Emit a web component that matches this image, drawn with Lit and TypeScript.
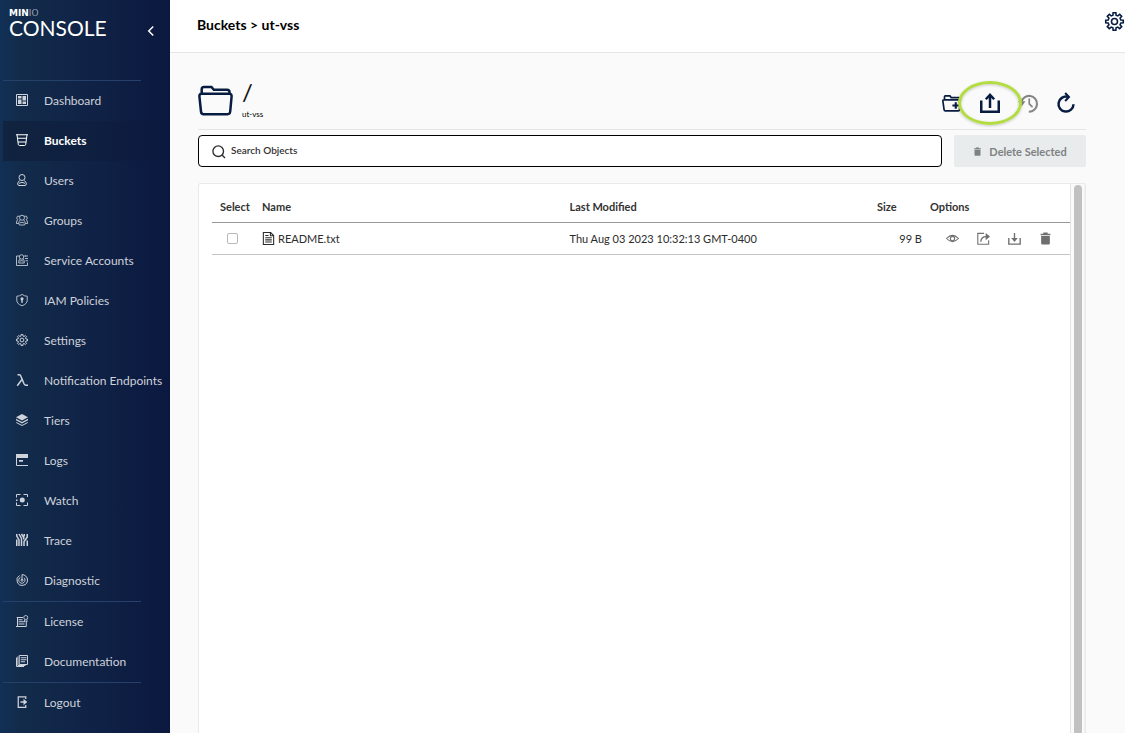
import { LitElement, html, svg, css, SVGTemplateResult } from "lit";
import { customElement, property } from "lit/decorators.js";

/** Outline of a cog with eight teeth, centred in a 24 unit box. */
function cogPath(outer = 11.2, inner = 8.2): string {
  const points: string[] = [];
  const point = (radius: number, degrees: number) => {
    const a = (degrees * Math.PI) / 180;
    points.push(`${(12 + radius * Math.cos(a)).toFixed(2)} ${(12 + radius * Math.sin(a)).toFixed(2)}`);
  };
  for (let i = 0; i < 8; i++) {
    const mid = i * 45;
    point(inner, mid - 14);
    point(outer, mid - 9);
    point(outer, mid + 9);
    point(inner, mid + 14);
  }
  return `M${points.join("L")}Z`;
}

const icons: Record<string, SVGTemplateResult> = {
  dashboard: svg`<path class="line" d="M1 1H23V23H1Z"/><path class="fill" d="M4 4h7v5H4zM4 11h7v9H4zM13 4h7v9h-7zM13 15h7v5h-7z"/>`,
  buckets: svg`<path class="line" d="M0 1.5H24M2 1.500L4.500 20.500Q5 23 7 23H17Q19 23 19.500 20.500L22 1.500M2.500 8.500H21.500M4 16H20"/>`,
  users: svg`<circle class="line" cx="12" cy="7" r="6"/><path class="line" d="M7.500 13.200C4.500 14.500 3.500 17.500 3.500 20Q3.500 23 6 23H18Q20.500 23 20.500 20C20.500 17.500 19.500 14.500 16.500 13.200M6 18.500Q12 15 18 18.500"/>`,
  groups: svg`<g class="thin"><circle cx="12" cy="7.500" r="5"/><path d="M8.500 12Q5.500 14.500 5.500 19Q5.500 22 8 22H16Q18.500 22 18.500 19Q18.500 14.500 15.500 12M7.500 18Q12 15 16.500 18"/><path d="M7.500 4.500Q1.500 2.500 1.500 8Q1.500 10.500 3.500 11.500Q.800 13 .800 19H5.500M16.500 4.500Q22.500 2.500 22.500 8Q22.500 10.500 20.500 11.500Q23.200 13 23.200 19H18.500"/></g>`,
  accounts: svg`<g class="thin"><path d="M7 4H1V23H23V17M20 4H17"/><circle cx="11" cy="6" r="4.500"/><path d="M8.500 9.500Q5.500 11 5.500 15V18H16.500V15Q16.500 11 13.500 9.500M7 14.500Q11 12 15 14.500"/><path d="M17 4H24M18 9H24M19 13.500H24"/></g>`,
  policies: svg`<path class="thin" d="M12 .8Q7 4.500 1.500 4.500V12Q1.500 20 12 23.500Q22.500 20 22.500 12V4.500Q17 4.500 12 .8Z"/><circle class="fill" cx="12" cy="9.500" r="3"/><path class="fill" d="M10.500 10h3v7.500h-3z"/>`,
  settings: svg`<path class="line" d="${cogPath()}"/><circle class="line" cx="12" cy="12" r="3.800"/>`,
  lambda: svg`<path class="heavy" d="M3 1.500H6.500Q9 1.500 10 5L16 19.500Q17.500 22.500 20 22.500H24M12.300 10.500L2.500 23.500"/>`,
  tiers: svg`<path class="fill" d="M12 0L24 6.500L12 13L0 6.500Z"/><path class="fill" d="M0 9.500L12 16L24 9.500V12.500L12 19L0 12.500Z"/><path class="line" d="M.5 17L12 23L23.500 17"/>`,
  logs: svg`<path class="line" d="M1 5V23H24"/><path class="fill" d="M0 0H24V8H0zM6 12h8v3.500H6z"/>`,
  watch: svg`<circle class="fill" cx="12.500" cy="12" r="5"/><path class="line" d="M1 7V1H9M15 1H23V6M23 17V23H15M9 23H1V17"/><path class="fill" d="M0 11h3v3H0z"/>`,
  trace: svg`<path class="heavy" d="M1.500 0V4L6 12V24M6 0L11 9V24M11 0L15.500 7V11M1.500 11V24M16.500 0V5M22.500 0V6L18.500 12L16 15V24M22.500 13V24"/>`,
  diagnostic: svg`<path class="line" d="M12 12V1.300M7 3A10.600 10.600 0 1 0 23 12M12 1.300A10.800 10.800 0 0 1 23 12M9 6.500A6.300 6.300 0 1 0 16 7.500"/><circle class="line" cx="12" cy="12.500" r="2"/>`,
  license: svg`<path class="line" d="M14 5H1.500M3 5V23H20.500V13M0 23H20"/><path class="line" d="M5 9.500H13M5 13.500H17M5 18H17"/><circle class="thin" cx="19.500" cy="5" r="4"/><path class="thin" d="M17 9V13.500L19.500 12L22 13.500V9"/>`,
  documentation: svg`<path class="line" d="M6.500 1H23V19H6.500ZM1 5V23H16M3.800 3V21H19"/><path class="line" d="M9.500 5.500H21M9.500 9.500H21M9.500 13.500H18"/>`,
  logout: svg`<path class="bold" d="M19.500 6V1.500H4.500V22.500H19.500V18"/><path class="heavy" d="M9 12H18"/><path class="fill" d="M15 5.500L22.500 12L15 18.500Z"/>`,
  chevron: svg`<path class="heavy" d="M16.500 3L7.500 12L16.500 21"/>`,
  folder: svg`<path class="bold" d="M3.700 9V4.500Q3.700 2 6 2H13.500L15.800 4.700H29Q31.500 4.700 31.500 7.200V9M3.500 8.800H31.500Q33.800 8.800 33.600 11.500L32.200 26.500Q31.900 29.200 29.500 29.200H5.500Q3.300 29.200 3 26.500L1.400 11.500Q1.200 8.800 3.500 8.800Z"/>`,
  folderPlus: svg`<path class="line" d="M3 8V4.500Q3 3.500 4 3.500H9.500L11 5.500H20.500Q21.500 5.500 21.500 6.500V8M2.500 8.200H22L21 20Q20.800 21.500 19.500 21.500H4Q2.700 21.500 2.500 20L1 9.500Q.8 8.200 2.500 8.200Z"/><path class="bold" d="M16.500 11V19M12.500 15H20.500"/>`,
  upload: svg`<path class="heavy" d="M1.500 9V22.500H22.500V9M12 18V3"/><path class="heavy" d="M7 7.500L12 2.300L17 7.500"/>`,
  history: svg`<path class="bold" d="M4 11A9.500 9.500 0 1 1 13 22.500"/><path class="fill" d="M0 10H9L4.500 16Z"/><path class="line" d="M13.500 6.500V13L17.500 17"/>`,
  refresh: svg`<path class="heavy" d="M14 4.500A9 9 0 1 0 21 13.500"/><path class="bold" d="M11 0L15.500 4.700L11 9.500"/>`,
  search: svg`<circle class="bold" cx="11.500" cy="11.500" r="9.800"/><path class="bold" d="M18.500 18.500L24 24"/>`,
  trash: svg`<path class="fill" d="M8 1H16V3H21V6H3V3H8ZM4 7.500H20V21Q20 23 18 23H6Q4 23 4 21Z"/>`,
  file: svg`<path class="line" d="M2.500 1H16L21.500 6.500V23H2.500ZM15.500 2V7H20.500M6 6.500H12M6 10.500H18M6 14.500H18M6 18.500H18"/>`,
  eye: svg`<path class="line" d="M1 12Q12 .5 23 12Q12 23.500 1 12Z"/><circle class="line" cx="12" cy="12" r="4"/>`,
  share: svg`<path class="line" d="M13 2.500H1.500V22.500H21.500V15"/><path class="bold" d="M7 18Q7.500 8.500 17 8.500"/><path class="fill" d="M16 2L24 8.500L16 15Z"/>`,
  download: svg`<path class="bold" d="M1.500 11V22.500H22.500V11M12 2V14"/><path class="fill" d="M6 11H18L12 18.500Z"/>`,
};

@customElement("ui-icon")
class UiIcon extends LitElement {
  @property() name = "";
  @property() box = "0 0 24 24";

  static styles = css`
    :host { display: block; flex: none; width: 12px; height: 12px; }
    svg { display: block; width: 100%; height: 100%; overflow: visible; }
    .line, .bold, .thin, .heavy { fill: none; stroke: currentColor; stroke-width: 2; }
    .thin { stroke-width: 1.700; }
    .bold { stroke-width: 2.500; }
    .heavy { stroke-width: 3; }
    .fill { fill: currentColor; }
  `;

  render() {
    return html`<svg viewBox=${this.box} aria-hidden="true">${icons[this.name]}</svg>`;
  }
}

interface Entry {
  icon: string;
  label: string;
  active?: boolean;
}

const navGroups: Entry[][] = [
  [
    { icon: "dashboard", label: "Dashboard" },
    { icon: "buckets", label: "Buckets", active: true },
    { icon: "users", label: "Users" },
    { icon: "groups", label: "Groups" },
    { icon: "accounts", label: "Service Accounts" },
    { icon: "policies", label: "IAM Policies" },
    { icon: "settings", label: "Settings" },
    { icon: "lambda", label: "Notification Endpoints" },
    { icon: "tiers", label: "Tiers" },
    { icon: "logs", label: "Logs" },
    { icon: "watch", label: "Watch" },
    { icon: "trace", label: "Trace" },
    { icon: "diagnostic", label: "Diagnostic" },
  ],
  [
    { icon: "license", label: "License" },
    { icon: "documentation", label: "Documentation" },
  ],
  [{ icon: "logout", label: "Logout" }],
];

@customElement("console-sidebar")
class ConsoleSidebar extends LitElement {
  static styles = css`
    :host {
      display: block;
      flex: none;
      width: 170px;
      box-sizing: border-box;
      background: linear-gradient(90deg, #113055 0%, #122b4b 12%, #0f2145 60%, #0b183f 100%);
      color: #ced2da;
      overflow: hidden;
    }
    .brand { display: flex; justify-content: space-between; height: 72px; padding: 8px 13px 0 9px; color: #fff; }
    .logo { display: flex; flex-direction: column; }
    .mark { font: 700 9px/10px "DejaVu Sans", sans-serif; }
    .mark span { font-weight: 200; }
    .product { font: 400 21px/20px Lato, sans-serif; }
    .collapse { align-self: flex-start; margin-top: 17px; padding: 0; border: 0; background: none; color: #fff; }
    ul { list-style: none; margin: 0; padding: 0 0 0 3px; }
    ul::before { content: ""; display: block; width: 138px; height: 1px; background: #25406a; }
    a {
      display: flex;
      align-items: center;
      gap: 16px;
      height: 38px;
      padding: 0 0 2px 13px;
      font-size: 12px;
      color: inherit;
      text-decoration: none;
      white-space: nowrap;
    }
    a.active { font-weight: 700; color: #fff; background: linear-gradient(90deg, #10233f 0%, #0e1f40 55%, #0b183f 100%); }
  `;

  render() {
    return html`
      <div class="brand">
        <div class="logo">
          <div class="mark">MIN<span>IO</span></div>
          <div class="product">CONSOLE</div>
        </div>
        <button class="collapse" aria-label="Collapse menu"><ui-icon name="chevron"></ui-icon></button>
      </div>
      <nav>
        ${navGroups.map(
          (group) => html`<ul>
            ${group.map(
              (item) => html`<li>
                <a href="#" class=${item.active ? "active" : ""}><ui-icon name=${item.icon}></ui-icon>${item.label}</a>
              </li>`
            )}
          </ul>`
        )}
      </nav>
    `;
  }
}

@customElement("object-browser")
class ObjectBrowser extends LitElement {
  static styles = css`
    :host { display: flex; flex-direction: column; flex: 1; min-height: 0; padding: 28px 39px 0 28px; color: #2c2c2c; }
    button { padding: 0; border: 0; background: none; color: inherit; font: inherit; }
    .title { display: flex; align-items: flex-start; height: 48px; border-bottom: 1px solid #e5e5e5; }
    .folder { width: 35px; height: 31px; margin-top: 4px; color: #081c42; }
    .path { flex: 1; margin-left: 9px; }
    h1 { margin: 0; font-size: 24px; font-weight: 400; line-height: 22px; color: #111; }
    .bucket { margin-top: 4px; font-size: 8px; line-height: 14px; color: #000; }
    .tools { position: relative; display: flex; align-items: center; gap: 18px; height: 44px; padding-right: 10px; color: #081c42; }
    .tools ui-icon { width: 20px; height: 20px; }
    .history { color: #848484; }
    .highlight {
      position: absolute;
      left: 16px;
      top: 0;
      width: 64px;
      height: 44px;
      box-sizing: border-box;
      border: 3px solid #b2dc40;
      border-radius: 50%;
      box-shadow: 0 1px 3px rgba(0, 0, 0, 0.2), inset 0 1px 3px rgba(0, 0, 0, 0.2);
    }
    .filters { display: flex; gap: 12px; height: 32px; margin: 5px 0 16px; }
    .search {
      display: flex;
      flex: 1;
      align-items: center;
      gap: 6px;
      padding-left: 13px;
      border: 1px solid #000;
      border-radius: 4px;
      background: #fff;
    }
    .search ui-icon { width: 13px; height: 13px; }
    .search input { flex: 1; padding: 0 0 2px; border: 0; outline: 0; font: 600 10px Lato, sans-serif; }
    .search input::placeholder { color: #333; opacity: 1; }
    .delete {
      display: flex;
      align-items: center;
      justify-content: center;
      gap: 7px;
      width: 132px;
      border-radius: 2px;
      background: #e8ecec;
      color: #7f8282;
      font-weight: 700;
      font-size: 11px;
    }
    .delete ui-icon { width: 9px; height: 9px; }
    .panel { display: flex; flex: 1; min-height: 0; border: 1px solid #eaeaea; border-bottom: 0; border-radius: 3px 3px 0 0; background: #fff; }
    .list { flex: 1; padding: 8px 0 0 13px; }
    .track { width: 8px; padding: 1px 2px 0 3px; border-left: 1px solid #e4e4e4; border-right: 1px solid #f0f0f0; background: #fafafa; }
    .thumb { height: 100%; border-radius: 4px 4px 0 0; background: #c1c1c1; }
    table { width: 100%; table-layout: fixed; border-collapse: collapse; font-size: 11px; }
    th, td { height: 30px; padding: 0; text-align: left; vertical-align: middle; }
    th { height: 28px; padding-bottom: 2px; border-bottom: 1px solid #999; font-weight: 700; color: #333; }
    td { height: 31px; border-bottom: 1px solid #c4c4c4; }
    .select { width: 50px; }
    th.select { padding-left: 8px; width: 42px; }
    .size { width: 53px; }
    td.size { padding-right: 8px; box-sizing: border-box; text-align: right; }
    .options { width: 140px; }
    .check { appearance: none; display: block; width: 11px; height: 11px; margin: 0 0 0 15px; border: 1px solid #b8b8b8; border-radius: 2px; background: #fff; }
    .file { display: flex; align-items: center; gap: 3px; }
    .file ui-icon { width: 13px; height: 13px; }
    .actions { display: flex; gap: 18px; padding-left: 16px; color: #6f6f6f; }
    .actions ui-icon { width: 13px; height: 13px; }
  `;

  render() {
    const actions = [
      ["eye", "Preview"],
      ["share", "Share"],
      ["download", "Download"],
      ["trash", "Delete"],
    ];
    return html`
      <div class="title">
        <ui-icon class="folder" name="folder" box="0 0 35 31"></ui-icon>
        <div class="path">
          <h1>/</h1>
          <div class="bucket">ut-vss</div>
        </div>
        <div class="tools">
          <button aria-label="Create path"><ui-icon name="folderPlus"></ui-icon></button>
          <button aria-label="Upload"><ui-icon name="upload"></ui-icon></button>
          <button class="history" aria-label="Show deleted objects"><ui-icon name="history"></ui-icon></button>
          <button aria-label="Refresh"><ui-icon name="refresh"></ui-icon></button>
          <span class="highlight"></span>
        </div>
      </div>
      <div class="filters">
        <label class="search">
          <ui-icon name="search"></ui-icon>
          <input type="text" placeholder="Search Objects" aria-label="Search Objects" />
        </label>
        <button class="delete" disabled><ui-icon name="trash"></ui-icon>Delete Selected</button>
      </div>
      <div class="panel">
        <div class="list">
          <table>
            <thead>
              <tr>
                <th class="select">Select</th>
                <th>Name</th>
                <th>Last Modified</th>
                <th class="size">Size</th>
                <th class="options">Options</th>
              </tr>
            </thead>
            <tbody>
              <tr>
                <td><input class="check" type="checkbox" aria-label="Select README.txt" /></td>
                <td><div class="file"><ui-icon name="file"></ui-icon>README.txt</div></td>
                <td>Thu Aug 03 2023 10:32:13 GMT-0400</td>
                <td class="size">99 B</td>
                <td>
                  <div class="actions">
                    ${actions.map(([icon, label]) => html`<button aria-label=${label}><ui-icon name=${icon}></ui-icon></button>`)}
                  </div>
                </td>
              </tr>
            </tbody>
          </table>
        </div>
        <div class="track"><div class="thumb"></div></div>
      </div>
    `;
  }
}

@customElement("app-root")
class AppRoot extends LitElement {
  static styles = css`
    :host { display: flex; height: 100vh; overflow: hidden; background: #fafafa; font-family: Lato, sans-serif; }
    main { display: flex; flex: 1; flex-direction: column; min-width: 0; }
    header {
      display: flex;
      align-items: center;
      justify-content: space-between;
      height: 52px;
      padding: 0 1px 0 27px;
      border-bottom: 1px solid #e5e5e5;
      background: #fff;
      color: #000;
    }
    .crumbs { padding-bottom: 4px; font-size: 14px; font-weight: 700; }
    .gear { margin-bottom: 9px; padding: 0; border: 0; background: none; color: #081c42; }
    .gear ui-icon { width: 19px; height: 19px; }
  `;

  render() {
    return html`
      <console-sidebar></console-sidebar>
      <main>
        <header>
          <span class="crumbs">Buckets &gt; ut-vss</span>
          <button class="gear" aria-label="Settings"><ui-icon name="settings"></ui-icon></button>
        </header>
        <object-browser></object-browser>
      </main>
    `;
  }
}
